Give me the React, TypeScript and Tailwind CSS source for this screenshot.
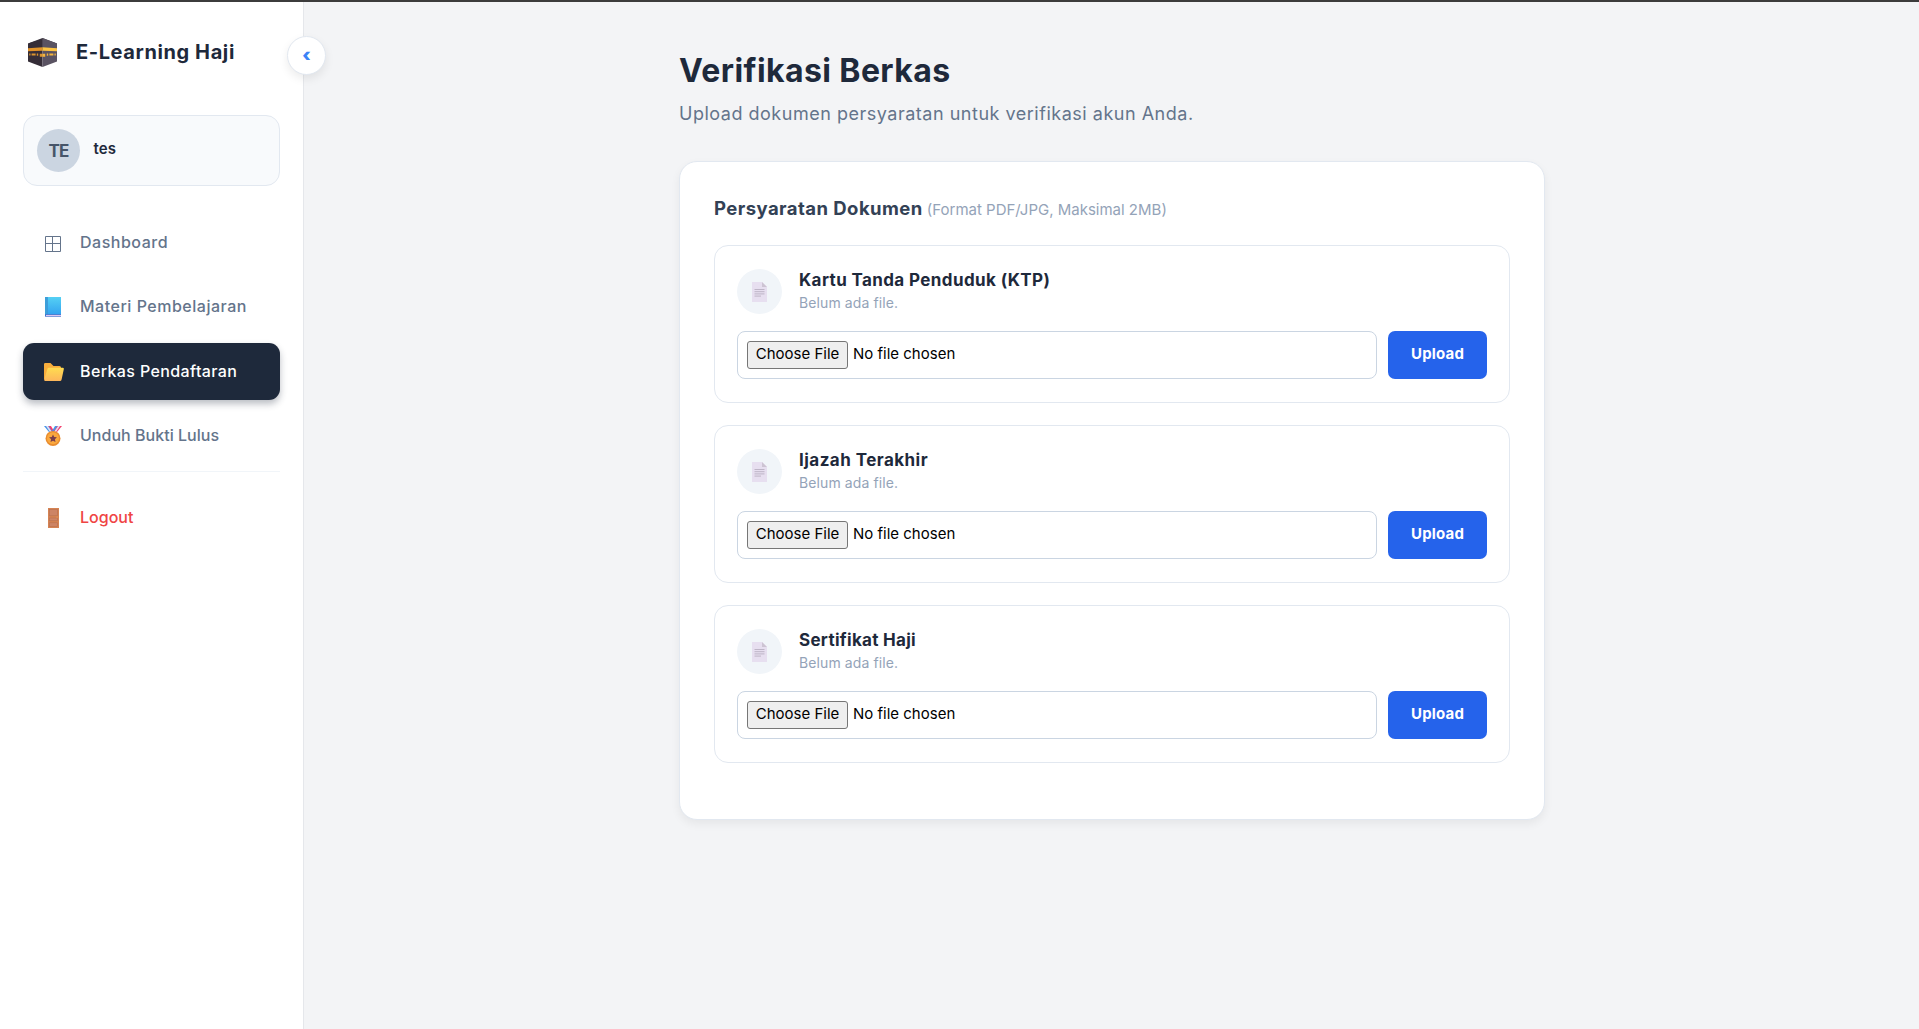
import type { ReactNode } from "react";

type NavItem = {
  label: string;
  icon: ReactNode;
  className: string;
  active?: boolean;
};

type DocumentItem = {
  id: string;
  title: string;
  className: string;
};

function KaabaIcon() {
  return (
    <svg viewBox="0 0 29 29" className="h-[29px] w-[29px]" aria-hidden>
      <path d="M0 5.5 14.5 0 29 5.5 14.5 12Z" fill="#37323b" />
      <path d="M14.5 0 29 5.5v4H14.5Z" fill="#5c5663" />
      <path d="M0 5.5 14.5 1v28L0 23.5Z" fill="#352d37" />
      <path d="M29 5.5 14.5 1v28L29 23.5Z" fill="#5a5362" />
      <path d="M0 10.2 14.5 9.2v3.6L0 13.2Z" fill="#e0922a" />
      <path d="M29 10.2 14.5 9.2v3.6L29 13.2Z" fill="#fcc343" />
      <path d="M1.2 15.4h1.3v2H1.2ZM3.6 15.4h4v2.1h-4ZM8.8 15.6h1.4v2.2H8.8ZM11.8 15.8h2.7v3h-2.7Z" fill="#d9932f" />
      <path d="M14.5 15.8h2.7v3h-2.7ZM18.8 15.6h1.4v2.2h-1.4ZM21.4 15.4h4v2.1h-4ZM26.5 15.4h1.3v2h-1.3Z" fill="#f5b53d" />
    </svg>
  );
}

function WindowIcon() {
  return (
    <svg viewBox="0 0 20 20" className="mt-0.5 h-5 w-5" fill="none" stroke="currentColor" aria-hidden>
      <path d="M2.5 2.5h15v15h-15ZM9.5 2.5v15M2.5 9.5h15" />
    </svg>
  );
}

function BookIcon() {
  return (
    <svg viewBox="0 0 20 20" className="h-5 w-5" aria-hidden>
      <defs>
        <linearGradient id="book" x1="0" y1="0" x2="0" y2="1">
          <stop offset="0" stopColor="#55d0f4" />
          <stop offset="1" stopColor="#34a5f0" />
        </linearGradient>
      </defs>
      <rect x="2" y="0" width="16" height="20" rx="0.6" fill="#3a78cf" />
      <rect x="4.5" y="0" width="13.5" height="17" fill="url(#book)" />
      <rect x="2" y="0" width="2.6" height="17" fill="#3c9fd9" />
      <rect x="3" y="17.9" width="15" height="1.2" fill="#dcc8f2" />
      <rect x="2" y="19.1" width="16" height="0.9" fill="#8b9fdc" />
    </svg>
  );
}

function FolderIcon() {
  return (
    <svg viewBox="0 0 20 20" className="h-5 w-5 overflow-visible" aria-hidden>
      <defs>
        <linearGradient id="folder" x1="0" y1="0" x2="0" y2="1">
          <stop offset="0" stopColor="#ffdc50" />
          <stop offset="1" stopColor="#fdb65b" />
        </linearGradient>
      </defs>
      <path d="M1 2.2Q1 1 2.2 1H7.5L10.5 4H16.5Q18 4 18 5.5V17.5H2Q1 17.5 1 16.5Z" fill="#f8ad3c" />
      <path d="M5.8 5.8H19.7Q21.2 5.8 20.8 7.2L18.6 17.5Q18.3 19 16.9 19H2.2Q.8 19 1.2 17.6L4.4 7Q4.7 5.8 5.8 5.8Z" fill="url(#folder)" />
    </svg>
  );
}

function MedalIcon() {
  return (
    <svg viewBox="0 0 20 20" className="h-5 w-5" aria-hidden>
      <path d="M1 0h6l4 6H6Z" fill="#4696e8" />
      <path d="M3 0h2l4 6H7Z" fill="#e3dcf2" />
      <path d="M5.6 0H8l3.5 6H9.5Z" fill="#f43f6e" />
      <path d="M19 0h-6L9 6h5Z" fill="#f43f6e" />
      <path d="M17 0h-2l-4 6h2Z" fill="#e3dcf2" />
      <path d="M14.4 0H12L9 5l1 1.5Z" fill="#4696e8" />
      <circle cx="10" cy="12.4" r="7.5" fill="#e98c2e" />
      <circle cx="10" cy="12.2" r="6" fill="#faa83e" />
      <path d="m10 8.4 1.2 2.6 2.7.3-2 2 .6 2.8-2.5-1.4-2.5 1.4.6-2.8-2-2 2.7-.3Z" fill="#7a3e4c" />
    </svg>
  );
}

function DoorIcon() {
  return (
    <svg viewBox="0 0 20 20" className="h-5 w-5" aria-hidden>
      <rect x="5" width="11" height="20" fill="#d58353" />
      <rect x="6.4" y="1.4" width="8" height="6.4" fill="#cd8465" stroke="#b9704f" strokeWidth="0.6" />
      <rect x="6.4" y="10" width="8" height="2.8" fill="#cd8465" stroke="#b9704f" strokeWidth="0.6" />
      <rect x="6.4" y="14.8" width="8" height="3.6" fill="#cd8465" stroke="#b9704f" strokeWidth="0.6" />
      <circle cx="14" cy="9" r="0.6" fill="#f0a259" />
    </svg>
  );
}

function PageIcon() {
  return (
    <svg viewBox="0 0 15 20" className="h-5 w-[15px]" aria-hidden>
      <path d="M0 0H10l5 5v15H0Z" fill="#e7dff0" />
      <path d="M10 0v5h5Z" fill="#cdc4d3" />
      <path d="M2.5 7.5h10M2.5 9.7h10M2.5 11.9h10M2.5 14.1H9" stroke="#b9b0c2" strokeWidth="0.9" />
    </svg>
  );
}

const navItems: NavItem[] = [
  { label: "Dashboard", icon: <WindowIcon />, className: "tracking-[0.032em]" },
  { label: "Materi Pembelajaran", icon: <BookIcon />, className: "tracking-[0.032em]" },
  { label: "Berkas Pendaftaran", icon: <FolderIcon />, className: "tracking-[0.024em]", active: true },
  { label: "Unduh Bukti Lulus", icon: <MedalIcon />, className: "tracking-[0.0015em]" },
];

const documents: DocumentItem[] = [
  { id: "ktp", title: "Kartu Tanda Penduduk (KTP)", className: "tracking-[0.023em]" },
  { id: "ijazah", title: "Ijazah Terakhir", className: "tracking-[0.027em]" },
  { id: "sertifikat", title: "Sertifikat Haji", className: "tracking-[0.017em]" },
];

function Sidebar() {
  return (
    <aside className="relative flex w-[304px] shrink-0 flex-col border-r border-gray-200 bg-white px-[23px] pt-[27px]">
      <div className="flex h-[46px] items-center gap-[19px] pl-[5px]">
        <KaabaIcon />
        <span className="text-xl font-bold tracking-[0.03em] whitespace-nowrap">E-Learning Haji</span>
      </div>
      <button
        type="button"
        className="absolute top-[34px] -right-[23px] flex h-[39px] w-[39px] items-center justify-center rounded-full border border-slate-200 bg-white pb-0.5 text-lg font-black text-[#3b82f6] shadow-[0_4px_10px_rgba(0,0,0,0.08)]"
      >
        ‹
      </button>

      <div className="mt-10 flex h-[71px] items-center gap-[13.5px] rounded-[14px] border border-slate-200 bg-slate-50 pl-[13px]">
        <div className="flex h-[43px] w-[43px] items-center justify-center rounded-full bg-[#cbd5e1] pt-0.5 text-[17px] font-bold tracking-[-0.05em] text-[#475569]">
          TE
        </div>
        <span className="pb-0.5 text-[15px] font-semibold tracking-[0.01em]">tes</span>
      </div>

      <nav className="mt-[28px] flex flex-col gap-[7.5px]">
        {navItems.map((item) => (
          <a
            key={item.label}
            href="#"
            className={`flex h-[57px] items-center gap-[17px] rounded-[11px] pl-5 font-medium whitespace-nowrap ${
              item.active
                ? "bg-[#1e293b] text-white shadow-[0_4px_7px_rgba(30,41,59,0.3)]"
                : "text-[#64748b]"
            }`}
          >
            {item.icon}
            <span className={`pb-0.5 ${item.className}`}>{item.label}</span>
          </a>
        ))}
      </nav>

      <div className="mt-1.5 border-t border-slate-100 pt-[18px]">
        <a href="#" className="flex h-[57px] items-center gap-[17px] pl-5 font-medium text-[#ef4444]">
          <DoorIcon />
          <span className="pb-0.5">Logout</span>
        </a>
      </div>
    </aside>
  );
}

function DocumentCard({ item }: { item: DocumentItem }) {
  return (
    <article className="h-[158px] rounded-[14px] border border-slate-200 px-[22px] pt-[23px]">
      <div className="flex items-center gap-[17px]">
        <div className="flex h-[45px] w-[45px] items-center justify-center rounded-full bg-slate-100">
          <PageIcon />
        </div>
        <div className="-mt-0.5">
          <h3 className={`text-[17px] leading-6 font-bold ${item.className}`}>{item.title}</h3>
          <p className="text-sm leading-[21px] tracking-[0.007em] text-[#94a3b8]">Belum ada file.</p>
        </div>
      </div>
      <div className="mt-[17px] flex h-12 gap-[11px]">
        <label
          htmlFor={item.id}
          className="flex flex-1 items-center gap-[5px] rounded-lg border border-slate-300 pl-[9px] text-[15px] text-black"
        >
          <span className="flex h-7 w-[101px] items-center justify-center rounded-[3px] border border-[#767676] bg-[#efefef] pb-px">
            Choose File
          </span>
          <span className="pb-px">No file chosen</span>
          <input id={item.id} type="file" className="hidden" />
        </label>
        <button
          type="button"
          className="w-[99px] rounded-[7px] bg-[#2563eb] pb-0.5 text-[15px] font-bold tracking-[0.011em] text-white"
        >
          Upload
        </button>
      </div>
    </article>
  );
}

export default function App() {
  return (
    <div className="flex h-screen flex-col bg-[#f3f4f6] font-['Inter',sans-serif] text-[#1e293b]">
      <div className="h-0.5 shrink-0 bg-[#3c3c3c]" />
      <div className="flex flex-1">
        <Sidebar />
        <main className="flex flex-1 justify-center pt-[45px] pl-px">
          <div className="w-[866px]">
            <h1 className="text-[32px] leading-[48px] font-bold tracking-[0.0125em]">Verifikasi Berkas</h1>
            <p className="mt-[5px] text-lg leading-[27px] tracking-[0.0285em] whitespace-nowrap text-[#64748b]">
              Upload dokumen persyaratan untuk verifikasi akun Anda.
            </p>

            <section className="mt-[34px] h-[659px] rounded-[18px] border border-slate-200 bg-white px-[34px] pt-8 shadow-[0_4px_10px_rgba(0,0,0,0.06)]">
              <h2 className="flex h-7 items-baseline gap-1 text-[18.5px] leading-7 font-bold tracking-[0.024em] text-[#334155]">
                Persyaratan Dokumen
                <span className="text-[15px] font-normal tracking-normal text-[#94a3b8]">
                  (Format PDF/JPG, Maksimal 2MB)
                </span>
              </h2>
              <div className="mt-[23px] flex flex-col gap-[22px]">
                {documents.map((item) => (
                  <DocumentCard key={item.id} item={item} />
                ))}
              </div>
            </section>
          </div>
        </main>
      </div>
    </div>
  );
}
